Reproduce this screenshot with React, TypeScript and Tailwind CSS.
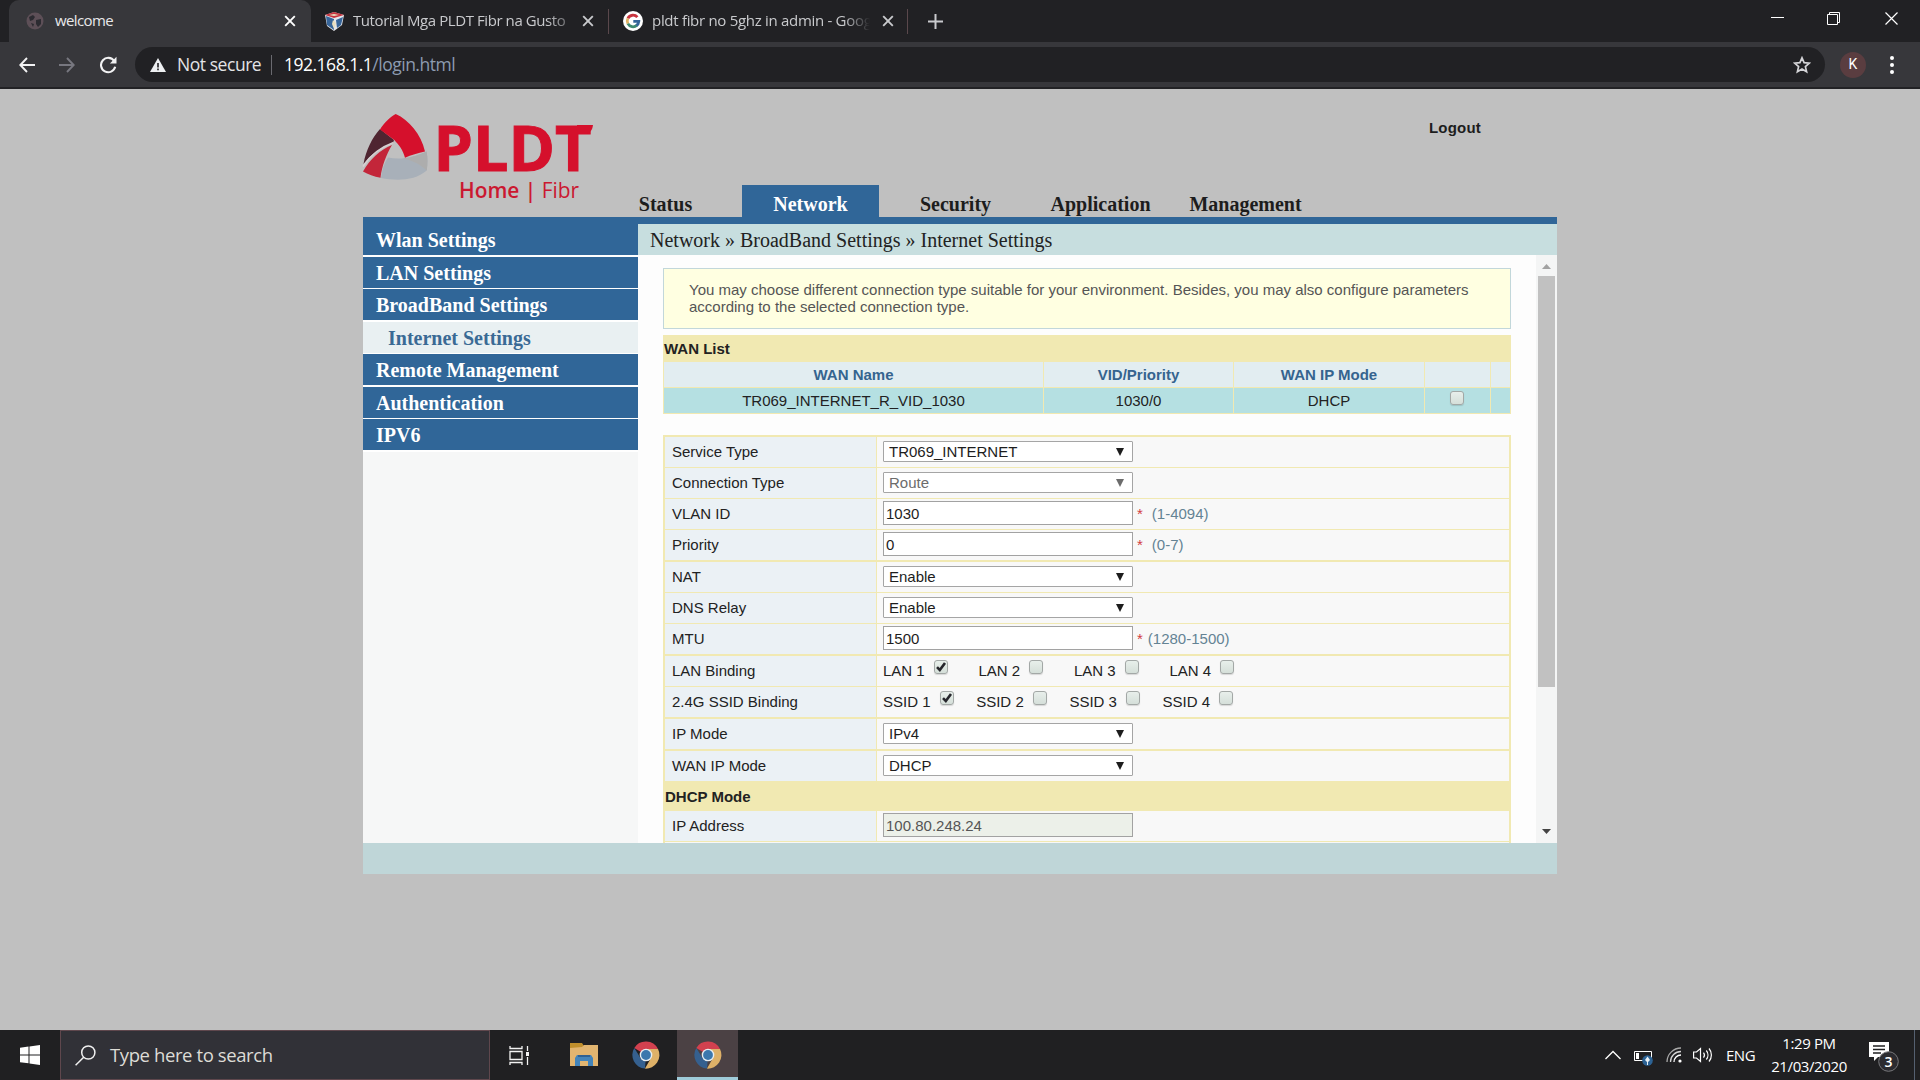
import React from "react";
import clsx from "clsx";

const tabs = ["Status", "Network", "Security", "Application", "Management"];

const menu = [
  { label: "Wlan Settings" },
  { label: "LAN Settings" },
  { label: "BroadBand Settings" },
  { label: "Internet Settings", sub: true },
  { label: "Remote Management" },
  { label: "Authentication" },
  { label: "IPV6" },
];

const CloseIcon: React.FC<{ className?: string }> = ({ className }) => (
  <svg viewBox="0 0 12 12" className={clsx("size-3 shrink-0", className)} fill="none" stroke="currentColor" strokeWidth="1.9">
    <path d="M1.2 1.2 10.8 10.8M10.8 1.2 1.2 10.8" />
  </svg>
);

const ChromeLogo = () => (
  <svg viewBox="0 0 28 28" className="size-7">
    <path d="M14 14 L2.3 7 A13.6 13.6 0 0 1 26 8 L14 8Z" fill="#d2414f" />
    <path d="M14 14 L13 27.6 A13.6 13.6 0 0 1 2.3 7 L8.5 17Z" fill="#35608f" />
    <path d="M14 8H26A13.6 13.6 0 0 1 13 27.6L19 17Z" fill="#deb168" />
    <circle cx="14" cy="14" r="6.3" fill="#e8eef2" />
    <circle cx="14" cy="14" r="4.9" fill="#3b77ad" />
  </svg>
);

const BrowserTabs = () => (
  <div className="flex h-[42px] items-center bg-[#212124] text-[15px] text-[#c9cacd]">
    <div className="ml-[9px] flex h-full w-[302px] items-center rounded-t-[10px] bg-[#37373b] pr-[15px] pl-[17px] text-[#e8e8ea]">
      <svg viewBox="0 0 18 18" className="size-[18px]">
        <circle cx="9" cy="9" r="8.5" fill="#5d4f57" />
        <path d="M3 5 7 3 9 5 7 8 4 9ZM10 8 15 7 15 12 12 15 10 12ZM5 11 8 12 7 15Z" fill="#2c2b31" />
      </svg>
      <span className="ml-[11px] grow pb-px tracking-[-0.6px]">welcome</span>
      <CloseIcon className="text-white" />
    </div>
    <svg viewBox="0 0 21 21" className="ml-[13px] size-[21px]">
      <path d="M1 4 10 1 20 4 18 14 10 20 3 15Z" fill="#e4e6ea" />
      <path d="M2 5 10 8 10 19 3 14Z" fill="#37659a" />
      <path d="M12 9 19 6 17 14 13 17Z" fill="#37659a" />
      <path d="M1 4 10 1 20 4 10 7Z" fill="#c7333e" />
      <path d="M5 4 10 3 15 4 10 5ZM9 9 12 12 10 18 8 13Z" fill="#e9dfc0" />
    </svg>
    <span className="ml-[8px] w-[215px] overflow-hidden [mask-image:linear-gradient(to_right,black_90%,#0006)] pb-px tracking-[-0.42px] whitespace-nowrap">
      Tutorial Mga PLDT Fibr na Gusto
    </span>
    <CloseIcon className="ml-[14px]" />
    <div className="ml-[14px] h-[25px] w-px bg-[#5a484c]" />
    <svg viewBox="0 0 20 20" className="ml-[14px] size-5" fill="none" strokeWidth="2.8">
      <circle cx="10" cy="10" r="10" fill="#fff" />
      <path d="M14.4 6.2A5.8 5.8 0 0 0 4.9 7.3" stroke="#c8343f" />
      <path d="M4.9 7.3A5.8 5.8 0 0 0 4.9 12.7" stroke="#dfb264" />
      <path d="M4.9 12.7A5.8 5.8 0 0 0 13.8 14.4" stroke="#3e8a70" />
      <path d="M13.4 14.7A5.8 5.8 0 0 0 15.8 10.4H10.3" stroke="#35659a" />
    </svg>
    <span className="ml-[9px] w-[218px] overflow-hidden [mask-image:linear-gradient(to_right,black_88%,transparent)] pb-px tracking-[-0.3px] whitespace-nowrap">
      pldt fibr no 5ghz in admin - Goog
    </span>
    <CloseIcon className="ml-[12px]" />
    <div className="ml-[13px] h-[25px] w-px bg-[#5a484c]" />
    <svg viewBox="0 0 15 15" className="ml-5 size-[15px]" stroke="currentColor" strokeWidth="2">
      <path d="M7.5 0V15M0 7.5H15" />
    </svg>
    <div className="mr-[22px] mb-[5px] ml-auto flex items-center gap-[43px] text-white">
      <svg viewBox="0 0 13 13" className="size-[13px]" stroke="currentColor">
        <path d="M0 5.5H13" />
      </svg>
      <svg viewBox="0 0 13 13" className="size-[13px]" fill="none" stroke="currentColor">
        <path d="M.5 2.5H10.5V12.5H.5ZM2.5 2.5V.5H12.5V10.5H10.5" />
      </svg>
      <svg viewBox="0 0 13 13" className="ml-[2px] size-[13px]" stroke="currentColor" strokeWidth="1.2">
        <path d="M.5.5 12.5 12.5M12.5.5.5 12.5" />
      </svg>
    </div>
  </div>
);

const Toolbar = () => (
  <div className="flex h-[47px] items-center border-b-2 border-[#222225] bg-[#37373b]">
    <svg viewBox="0 0 16 16" className="ml-[19px] size-4" fill="none" stroke="#f2f2f3" strokeWidth="1.9">
      <path d="M16 8H1.5M8 1 1.3 8 8 15" />
    </svg>
    <svg viewBox="0 0 16 16" className="ml-[24px] size-4" fill="none" stroke="#77777f" strokeWidth="1.9">
      <path d="M0 8H14.5M8 1 14.7 8 8 15" />
    </svg>
    <svg viewBox="0 0 18 18" className="ml-[24px] size-[18px]" fill="none" stroke="#f2f2f3" strokeWidth="2.1">
      <path d="M15.2 5A7.2 7.2 0 1 0 16.2 10.8" />
      <path d="M17.5.8V7.4H10.9Z" fill="#f2f2f3" stroke="none" />
    </svg>
    <div className="ml-[18px] flex h-[35px] w-[1690px] items-center rounded-full bg-[#212124] text-[17.5px]">
      <svg viewBox="0 0 16 14" className="ml-[15px] h-[14px] w-4">
        <path d="M8 0 16 14H0Z" fill="#eef0f2" />
        <path d="M7.2 5H8.8V9.4H7.2ZM7.2 10.6H8.8V12.2H7.2Z" fill="#212124" />
      </svg>
      <span className="ml-[11px] w-[94px] tracking-[-0.45px] whitespace-nowrap text-[#e4e4e6]">Not secure</span>
      <div className="h-5 w-px bg-[#6a6a70]" />
      <span className="ml-[12px] tracking-[-0.5px] text-white">
        192.168.1.1<span className="text-[#8d9bb0]">/login.html</span>
      </span>
      <svg viewBox="0 0 18 18" className="mr-[14px] ml-auto size-[18px]" fill="none" stroke="#d5d5d8" strokeWidth="1.7">
        <path d="M9 1.8 11.1 6.6 16.4 7.1 12.4 10.6 13.6 15.8 9 13 4.4 15.8 5.6 10.6 1.6 7.1 6.9 6.6Z" />
      </svg>
    </div>
    <div className="ml-[15px] flex size-[26px] items-center justify-center rounded-full bg-[#5a3d40] font-[Roboto] text-[14px] text-white">
      K
    </div>
    <div className="ml-[24px] flex flex-col gap-[3px]">
      <i className="size-[4px] rounded-full bg-white" />
      <i className="size-[4px] rounded-full bg-white" />
      <i className="size-[4px] rounded-full bg-white" />
    </div>
  </div>
);

const PldtLogo = () => (
  <svg viewBox="0 0 232 92" className="h-[92px] w-[232px] overflow-visible">
    <path d="M.5 50C3 36 9 24 17 15L31 26L30 29C18 33 8 40 .5 50Z" fill="#4f2531" />
    <path d="M17 15.500C21 9 27 3 32.700 0C46 6 58 20 62 37.500C55 39 48 41 42 43.700C40 36 36 31 31.300 26Z" fill="#d5102c" />
    <path d="M0 57.500C7 45 17 36 29 31C23 41 19 52 17.500 63.700C11 62.500 5 60.500 0 57.500Z" fill="#c3263a" />
    <path d="M0 52.500C8 40 18 33 30.500 28.500" fill="none" stroke="#d6d0d2" strokeWidth="1.500" />
    <path d="M25 43.500C38 46.500 52 43 63.500 37.500C65 44 64.500 51 63.700 56.500C52 67 33 67 18 64C19 56 21 49 25 43.500Z" fill="#a8b0b9" />
    <path d="M40 44.500C49 43.500 56 41 63.500 37.500C65 44 64.500 51 63.700 56.500C57 50 49 46.500 40 44.500Z" fill="#adadad" />
    <text
      x="70.5"
      y="56.5"
      textLength="158"
      lengthAdjust="spacingAndGlyphs"
      fontFamily="Open Sans"
      fontWeight="700"
      fontSize="63"
      fill="#d5102c"
      stroke="#d5102c"
      strokeWidth="1"
    >
      PLDT
    </text>
    <path d="M214 11H230C229.500 16 227 19.500 221 20H214Z" fill="#d5102c" />
    <text x="96" y="83.5" textLength="120" lengthAdjust="spacingAndGlyphs" fontFamily="Open Sans" fontSize="22" fill="#cb1830">
      <tspan fontWeight="600">Home |</tspan> Fibr
    </text>
  </svg>
);

const Header = () => (
  <header className="flex h-[128px]">
    <div className="w-[230px] pt-[25px]">
      <PldtLogo />
    </div>
    <div className="flex flex-col justify-between">
      <a className="mt-[30px] ml-[836px] text-[15px] leading-[18px] font-bold tracking-[0.2px] text-[#1d1d1d]">Logout</a>
      <nav className="flex font-['Liberation_Serif',serif] text-[20px] leading-7 font-bold text-[#1d1d1d]">
        {tabs.map((tab) => (
          <a key={tab} className={clsx("mx-1 h-8 w-[137px] pt-[5px] text-center", tab === "Network" && "bg-[#306698] text-white")}>
            {tab}
          </a>
        ))}
      </nav>
    </div>
  </header>
);

const Sidebar = () => (
  <aside className="w-[275px] bg-[#f6f7f7] font-['Liberation_Serif',serif] text-[20px] leading-[32px] font-bold">
    {menu.map(({ label, sub }) => (
      <div
        key={label}
        className={clsx(
          "box-content h-[31px] border-white last:border-b-0 odd:border-b-2 even:border-b",
          sub ? "bg-[#e9f0f2] pl-[25px] text-[#3a6a95]" : "bg-[#306698] pl-[13px] text-white"
        )}
      >
        {label}
      </div>
    ))}
  </aside>
);

const Checkbox: React.FC<{ checked?: boolean; className?: string }> = ({ checked, className }) => (
  <span
    className={clsx(
      "inline-flex size-[14px] shrink-0 rounded-[3px] border border-[#a3a8a6] bg-linear-to-b from-[#e8efeb] to-[#d5dfd9] shadow-[0_1px_1px_#0002]",
      className
    )}
  >
    {checked && (
      <svg viewBox="0 0 12 12" className="size-3" fill="none" stroke="#26262c" strokeWidth="2.6">
        <path d="M2 6.2 4.8 9 10 2" />
      </svg>
    )}
  </span>
);

const Select: React.FC<{ value: string; disabled?: boolean }> = ({ value, disabled }) => (
  <div
    className={clsx(
      "-mt-px flex h-[21px] w-[250px] items-center justify-between rounded-[1px] border border-[#a5a5a5] bg-white pr-[8px] pl-[5px]",
      disabled ? "text-[#6c6c6c]" : "text-[#1d1d1d]"
    )}
  >
    <span className="leading-[19px]">{value}</span>
    <svg viewBox="0 0 8 8" className="size-2" fill="currentColor">
      <path d="M0 0H8L4 8Z" />
    </svg>
  </div>
);

const Input: React.FC<{ value: string; hint?: string; tight?: boolean; disabled?: boolean }> = ({ value, hint, tight, disabled }) => (
  <>
    <div
      className={clsx(
        "-mt-[2px] h-6 w-[250px] border border-[#a2a2a2] pl-[2px] leading-6",
        disabled ? "bg-[#ecf0e9] text-[#555]" : "bg-white text-[#1d1d1d]"
      )}
    >
      {value}
    </div>
    {hint && (
      <>
        <span className="ml-[4px] text-[#d23b40]">*</span>
        <span className={clsx("text-[#648394]", tight ? "ml-[5px]" : "ml-[9px]")}>{hint}</span>
      </>
    )}
  </>
);

const Bindings: React.FC<{ name: string; cell: string }> = ({ name, cell }) => (
  <>
    {[1, 2, 3, 4].map((n) => (
      <label key={n} className={clsx("flex", cell)}>
        <span>
          {name} {n}
        </span>
        <Checkbox checked={n === 1} className="ml-[9px]" />
      </label>
    ))}
  </>
);

// thick rows close a group with a double border
const Row: React.FC<{ label: string; thick?: boolean; children: React.ReactNode }> = ({ label, thick, children }) => (
  <div className={clsx("flex border-[#f1e9b2]", thick ? "border-b-2" : "border-b")}>
    <div className="h-[30px] w-[212px] border-r border-[#f1e9b2] bg-[#ebf1f5] pl-[7px] leading-[29px]">{label}</div>
    <div className="flex h-[30px] grow items-center bg-[#f8f8f8] pl-[6px]">{children}</div>
  </div>
);

const WanTable = () => (
  <div className="mt-[6px] text-center">
    <div className="h-[27px] bg-[#f1e9b2] pl-px text-left leading-7 font-bold">WAN List</div>
    <div className="grid grid-cols-[379px_189px_190px_65px_19px] gap-px bg-[#f1e9b2] px-px pb-px">
      {["WAN Name", "VID/Priority", "WAN IP Mode", "", ""].map((h, i) => (
        <div key={i} className="h-[25px] bg-[#e2edf1] leading-[26px] font-bold text-[#35648f]">
          {h}
        </div>
      ))}
      {["TR069_INTERNET_R_VID_1030", "1030/0", "DHCP"].map((v) => (
        <div key={v} className="h-[25px] bg-[#b5e0e2] leading-[25px]">
          {v}
        </div>
      ))}
      <div className="flex justify-center bg-[#b5e0e2] pt-[3px] pr-[2px]">
        <Checkbox />
      </div>
      <div className="bg-[#b5e0e2]" />
    </div>
  </div>
);

const Content = () => (
  <div className="flex h-[588px] overflow-hidden bg-[#fdfdfd]">
    <div className="ml-[25px] w-[848px] shrink-0 pt-[13px] text-[15px] text-[#222]">
      <div className="h-[61px] border border-[#c2d7da] bg-[#ffffe1] pt-[12px] pl-[25px] leading-[17px] text-[#555]">
        You may choose different connection type suitable for your environment. Besides, you may also configure parameters
        <br />
        according to the selected connection type.
      </div>
      <WanTable />
      <div className="mt-[21px] border-2 border-[#f1e9b2]">
        <Row label="Service Type">
          <Select value="TR069_INTERNET" />
        </Row>
        <Row label="Connection Type">
          <Select value="Route" disabled />
        </Row>
        <Row label="VLAN ID">
          <Input value="1030" hint="(1-4094)" />
        </Row>
        <Row label="Priority" thick>
          <Input value="0" hint="(0-7)" />
        </Row>
        <Row label="NAT">
          <Select value="Enable" />
        </Row>
        <Row label="DNS Relay">
          <Select value="Enable" />
        </Row>
        <Row label="MTU" thick>
          <Input value="1500" hint="(1280-1500)" tight />
        </Row>
        <Row label="LAN Binding">
          <Bindings name="LAN" cell="w-[95.5px]" />
        </Row>
        <Row label="2.4G SSID Binding" thick>
          <Bindings name="SSID" cell="w-[93.2px]" />
        </Row>
        <Row label="IP Mode" thick>
          <Select value="IPv4" />
        </Row>
        <Row label="WAN IP Mode">
          <Select value="DHCP" />
        </Row>
        <div className="h-[29px] bg-[#f1e9b2] leading-[29px] font-bold">DHCP Mode</div>
        <Row label="IP Address">
          <Input value="100.80.248.24" disabled />
        </Row>
        <div className="h-4 bg-[#f8f8f8]" />
      </div>
    </div>
    <div className="ml-auto flex w-[21px] flex-col items-center justify-between bg-[#f4f5f5]">
      <svg viewBox="0 0 21 21" className="size-[21px] shrink-0">
        <path d="M6 14 10.5 9 15 14Z" fill="#a2a2a2" />
      </svg>
      <div className="mb-auto h-[411px] w-[17px] bg-[#c1c1c1]" />
      <svg viewBox="0 0 21 21" className="size-[21px] shrink-0">
        <path d="M6 7 10.5 12 15 7Z" fill="#444" />
      </svg>
    </div>
  </div>
);

const Taskbar = () => (
  <footer className="flex h-[50px] items-center bg-[#202022] text-white">
    <svg viewBox="0 0 20 20" className="ml-5 size-5" fill="#fff">
      <path d="M0 2.8 8.5 1.6V9.4H0ZM9.5 1.4 20 0V9.4H9.5ZM0 10.4H8.5V18.3L0 17.2ZM9.5 10.4H20V20L9.5 18.5Z" />
    </svg>
    <div className="ml-5 flex h-full w-[430px] items-center border border-[#5f474d] bg-[#313137]">
      <svg viewBox="0 0 21 21" className="ml-[14px] size-[21px]" fill="none" stroke="#f0f0f0" strokeWidth="1.5">
        <circle cx="13.3" cy="7.5" r="6.6" />
        <path d="M8.7 12.2.6 20.3" />
      </svg>
      <span className="ml-[14px] text-[18.5px] tracking-[-0.4px] text-[#dddcd6]">Type here to search</span>
    </div>
    <svg viewBox="0 0 21 21" className="ml-[19px] size-[21px]" fill="none" stroke="#f2f2f2" strokeWidth="1.3">
      <path d="M1 1V3.5H13V1M1 6.5H13V14.5H1ZM1 20V17.5H13V20M18.5 1V6M18.5 12V20" />
      <path d="M17 7H20V11H17Z" fill="#f2f2f2" stroke="none" />
    </svg>
    <svg viewBox="0 0 28 24" className="ml-[40px] h-6 w-7">
      <path d="M0 0H12L14 3H28V23H0Z" fill="#c08f2c" />
      <path d="M0 5 12 4 14 2H28V23H0Z" fill="#e2b570" />
      <path d="M5 23V15L7 12H21L23 15V23H18V18H10V23Z" fill="#4384ba" />
      <path d="M8 12H20V14H8Z" fill="#2f6193" />
    </svg>
    <div className="ml-[17px] flex h-full w-[62px] items-center justify-center">
      <ChromeLogo />
    </div>
    <div className="flex h-full w-[61px] items-center justify-center border-b-[3px] border-[#9fcbd9] bg-[#4b4144] pt-[3px]">
      <ChromeLogo />
    </div>
    <div className="mr-[5px] ml-auto flex h-full items-center border-r border-[#556070]">
      <svg viewBox="0 0 16 10" className="h-[10px] w-4" fill="none" stroke="#fff" strokeWidth="1.3">
        <path d="M.5 9 8 1.5 15.5 9" />
      </svg>
      <svg viewBox="0 0 19 16" className="mt-[5px] ml-[13px] h-4 w-[19px]">
        <path d="M.5 1.5H17.5V10.5H.5Z" fill="none" stroke="#fff" />
        <path d="M2 3H5V9H2Z" fill="#fff" />
        <circle cx="13.5" cy="10.5" r="5.3" fill="#2c6294" />
        <path d="M13.5 6.5 16 10 13.5 12.5 11 10ZM13 12H14V15H13Z" fill="#e8f0f5" />
      </svg>
      <svg viewBox="0 0 16 16" className="ml-[13px] size-4" fill="none" strokeWidth="1.3">
        <path d="M1 15A14 14 0 0 1 15 1" stroke="#a9a9a9" />
        <path d="M4.5 15A10.5 10.5 0 0 1 15 4.500" stroke="#d5d5d5" />
        <path d="M8 15A7 7 0 0 1 15 8" stroke="#fff" />
        <circle cx="14" cy="14" r="1.6" fill="#fff" />
      </svg>
      <svg viewBox="0 0 21 18" className="ml-[11px] h-[18px] w-[21px]" fill="none" stroke="#fff" strokeWidth="1.2">
        <path d="M.6 6H3.5L7.5 2.5V15.5L3.5 12H.6ZM10.5 6.5A4 4 0 0 1 10.5 11.5M13.3 4.5A7 7 0 0 1 13.3 13.5M16 2.5A10 10 0 0 1 16 15.5" />
      </svg>
      <span className="ml-[12px] w-[30px] text-[15px] tracking-[-0.5px]">ENG</span>
      <div className="ml-[13px] w-[80px] text-center text-[15px] leading-[23px] tracking-[-0.4px] whitespace-nowrap">
        <div>1:29 PM</div>
        <div>21/03/2020</div>
      </div>
      <svg viewBox="0 0 30 32" className="mt-[2px] mr-[15px] ml-[20px] h-8 w-[30px]">
        <path d="M0 2H20V17H9L5 21V17H0Z" fill="#fff" />
        <path d="M4 6H16M4 9.5H16M4 13H12" stroke="#202022" strokeWidth="1.3" />
        <circle cx="19.5" cy="21.5" r="9.8" fill="#2b2b30" stroke="#77777a" />
        <text x="19.5" y="26.5" textAnchor="middle" fontFamily="Open Sans" fontWeight="600" fontSize="14" fill="#fff">
          3
        </text>
      </svg>
    </div>
  </footer>
);

const App: React.FC = () => {
  return (
    <div className="flex h-[1080px] w-[1920px] flex-col overflow-hidden bg-[#c0c0c0] font-['Open_Sans',sans-serif]">
      <BrowserTabs />
      <Toolbar />
      <main className="ml-[363px] w-[1194px] grow font-['Liberation_Sans',sans-serif]">
        <Header />
        <div className="h-[7px] bg-[#306698]" />
        <div className="flex h-[619px]">
          <Sidebar />
          <section className="grow">
            <div className="h-[31px] bg-[#c7dedf] pl-[12px] font-['Liberation_Serif',serif] text-[20px] leading-[32px] text-[#222]">
              Network » BroadBand Settings » Internet Settings
            </div>
            <Content />
          </section>
        </div>
        <div className="h-[31px] bg-[#bfd6d8]" />
      </main>
      <Taskbar />
    </div>
  );
};

export default App;
